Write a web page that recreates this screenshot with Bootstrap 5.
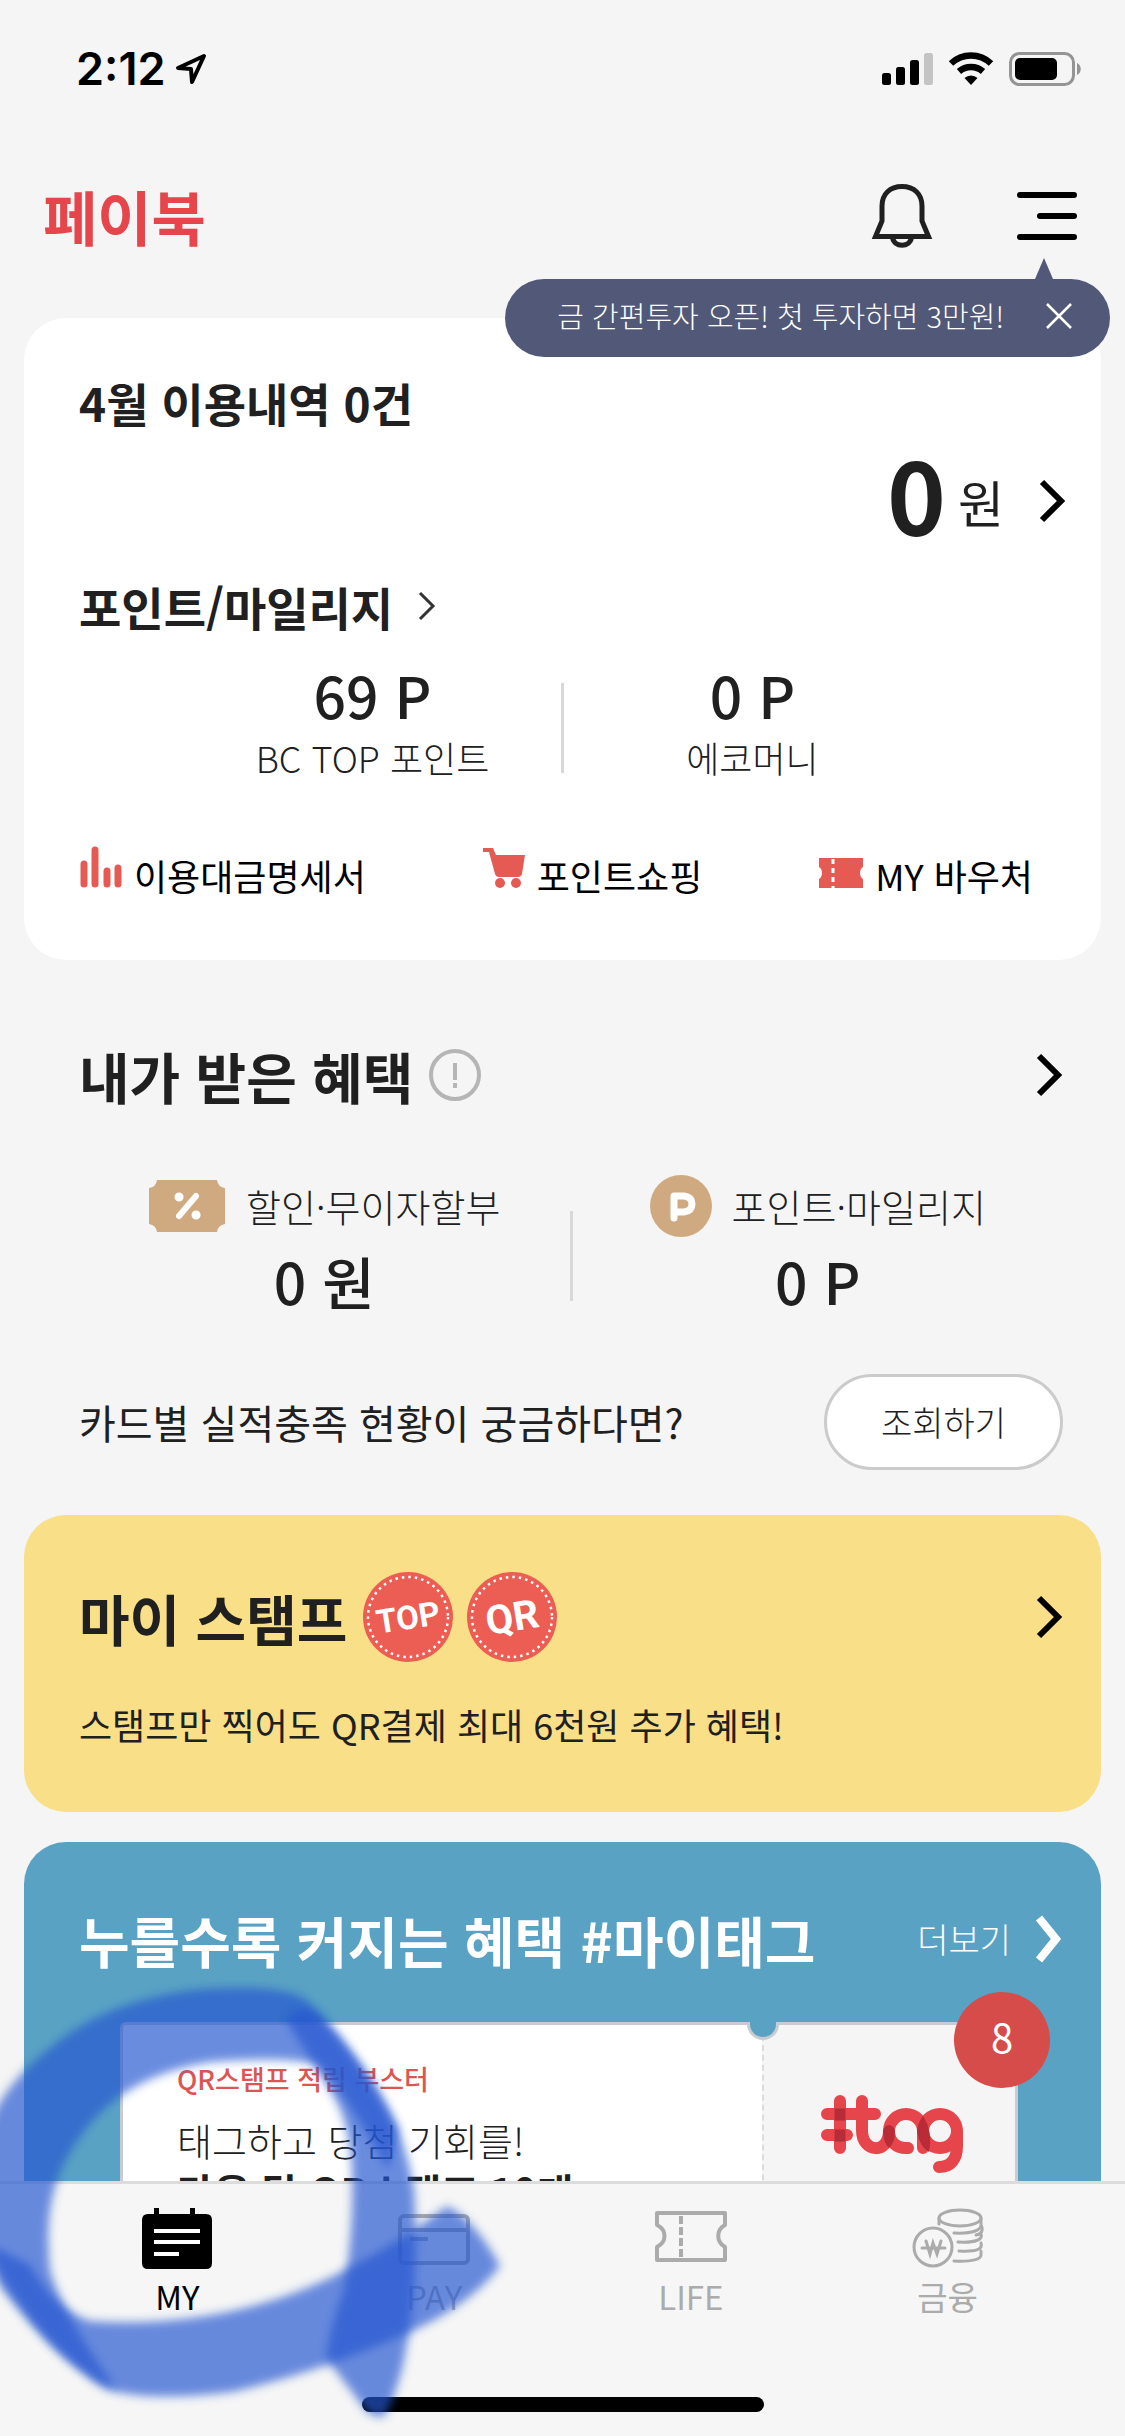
<!DOCTYPE html>
<html lang="ko">
<head>
<meta charset="utf-8">
<meta name="viewport" content="width=device-width, initial-scale=1">
<title>페이북</title>
<link href="https://cdn.jsdelivr.net/npm/bootstrap@5.3.0/dist/css/bootstrap.min.css" rel="stylesheet">
<style>
  body { background: #f5f5f5; color: #202020; font-family: "Noto Sans CJK KR", "Noto Sans", sans-serif; }
  a, a:hover { color: inherit; text-decoration: none; }
  svg { display: block; flex: none; }
  .plain-btn { border: 0; background: none; padding: 0; color: inherit; }

  .status-bar { height: 138px; padding: 0 43px 0 76px; color: #000; font-family: Inter, sans-serif; font-size: 45px; font-weight: 600; }
  .app-header { height: 156px; padding: 0 48px 0 43px; }
  .brand-logo { font-size: 59px; line-height: 70px; font-weight: 700; color: #e6464b; }
  .brand-logo:hover { color: #e6464b; }
  .header-tip { top: 141px; right: 15px; height: 78px; padding: 0 38px 4px 52px; border-radius: 39px; background: #525978; color: #fff; font-size: 29px; gap: 42px; z-index: 5; }
  .header-tip::before { content: ""; position: absolute; right: 57px; bottom: 100%; border: 9px solid transparent; border-top: 0; border-bottom: 21px solid #525978; }

  .main-area { padding: 24px 24px 0; min-height: 0; }
  .panel { border-radius: 42px; padding-left: 55px; padding-right: 38px; }
  .panel-usage { background: #fff; padding-top: 54px; padding-bottom: 61px; }
  .panel-benefit { padding-top: 80px; padding-bottom: 45px; }
  .panel-stamp { background: #f9df87; padding-top: 57px; padding-bottom: 64px; }
  .panel-tag { background: #5aa2c4; padding-top: 62px; margin-top: 30px; color: #fff; }

  .title-md { font-size: 46px; line-height: 60px; font-weight: 700; margin: 0; }
  .title-lg { font-size: 55px; line-height: 70px; font-weight: 700; margin: 0; }
  .text-std { font-size: 36px; line-height: 48px; }
  .text-mid { font-size: 38px; line-height: 48px; }
  .text-lead { font-size: 40px; line-height: 48px; }
  .text-sm2 { font-size: 34px; line-height: 48px; }
  .thin { font-weight: 300; }

  .amount { margin: 11px -3px 0 0; gap: 12px; }
  .amount-num { font-size: 100px; line-height: 100px; font-weight: 700; }
  .amount-unit { font-size: 50px; line-height: 60px; }
  .amount svg { margin-left: 22px; }
  .value { font-size: 57px; line-height: 62px; font-weight: 500; }
  .points-title { margin-top: 33px; gap: 24px; }
  .points { margin: 27px 122px 0 105px; }
  .points .value { margin-bottom: 8px; }
  .points .rule-v { margin-top: 12px; }
  .rule-v { width: 3px; height: 90px; background: #d8d8d8; flex: none; }
  .shortcuts { height: 48px; margin-top: 70px; padding-right: 30px; color: #000; }
  .shortcuts a { gap: 11px; }

  .benefit-row { margin-top: 65px; }
  .benefit-row .rule-v { margin-bottom: 10px; }
  .benefit-kind { height: 62px; gap: 20px; margin-bottom: 12px; }
  .inquiry { margin-top: 63px; }
  .btn-inquiry { border: 3px solid #cbcbcb; border-radius: 48px; background: #fff; padding: 21px 54px; color: #202020; }
  .stamp-text { margin-top: 38px; }
  .stamps { gap: 14px; margin-left: 16px; }

  .coupon { margin: 48px 45px 0 41px; height: 400px; border: 3px solid #c8ccd2; border-radius: 6px; background: #fff; color: #202020; }
  .coupon-body { padding: 36px 0 0 54px; }
  .coupon-kind { font-size: 27px; line-height: 36px; font-weight: 500; color: #dc5553; margin-bottom: 19px; }
  .coupon-prize { margin-top: 3px; }
  .coupon-side { width: 253px; background: #f5f5f5; border-left: 2px dashed #dcdcdc; padding: 69px 0 0 57px; }
  .coupon-notch { width: 32px; height: 18px; top: -3px; right: 236px; background: #5aa2c4; border: 3px solid #c8ccd2; border-top: 0; border-radius: 0 0 16px 16px; }
  .coupon-count { width: 96px; height: 96px; top: -33px; right: -35px; border-radius: 50%; background: #d64c4a; color: #fff; font-size: 40px; line-height: 88px; text-align: center; }

  .tab-bar { background: #f6f6f6; border-top: 3px solid #dcdcdc; padding: 24px 49px; height: 255px; }
  .tab-bar a { color: #ababab; font-size: 33px; line-height: 44px; gap: 4px; }
  .tab-bar a.active { color: #000; }
  .home-bar { width: 402px; height: 15px; bottom: 24px; left: 50%; margin-left: -201px; border-radius: 8px; background: #000; }
  .marker { left: 0; bottom: 0; z-index: 10; pointer-events: none; }
</style>
<script src="https://cdn.jsdelivr.net/npm/bootstrap@5.3.0/dist/js/bootstrap.bundle.min.js"></script>
</head>
<body>
<div class="vh-100 d-flex flex-column overflow-hidden position-relative">

  <div class="status-bar d-flex align-items-center justify-content-between flex-shrink-0">
    <div class="d-flex align-items-center gap-2">
      <span>2:12</span>
      <svg width="34" height="32" viewBox="-2 0 34 32" fill="none" stroke="#000" stroke-width="4" stroke-linejoin="round"><path d="M29 3 3 15l13 1 1 13z"/></svg>
    </div>
    <svg width="200" height="36" viewBox="0 0 200 36">
      <rect x="0" y="22" width="9" height="12" rx="2.500"/><rect x="14" y="16" width="9" height="18" rx="2.500"/><rect x="28" y="9" width="9" height="25" rx="2.500"/><rect x="42" y="2" width="9" height="32" rx="2.500" fill="#c4c4c4"/>
      <g fill="none" stroke="#000" stroke-width="6.500"><path d="M69 12.500a29 29 0 0 1 40 0"/><path d="M77 20.500a18 18 0 0 1 24 0"/></g>
      <path d="M89 34l-6.500-7a9.500 9.500 0 0 1 13 0z"/>
      <rect x="128.500" y="2.500" width="63" height="31" rx="9" fill="none" stroke="#949494" stroke-width="3"/>
      <rect x="133" y="7" width="42" height="22" rx="5"/><path d="M195 12c5 2 5 10 0 12z" fill="#949494"/>
    </svg>
  </div>

  <header class="app-header d-flex align-items-center justify-content-between position-relative flex-shrink-0">
    <a class="brand-logo" href="#">페이북</a>
    <div class="d-flex align-items-center">
      <button class="plain-btn" type="button" aria-label="알림">
        <svg width="62" height="66" viewBox="0 0 62 66" fill="none" stroke="#202020" stroke-width="5"><path d="M4.500 53.500h53L51 38V23C51 11 43 3.500 31 3.500S11 11 11 23v15z"/><path d="M21.500 54c1 11 18 11 19 0"/></svg>
      </button>
      <button class="plain-btn ms-5 ps-4" type="button" aria-label="메뉴">
        <svg width="72" height="50" viewBox="-12 0 72 50" stroke="#000" stroke-width="6" stroke-linecap="round"><path d="M3 4h54M23 25h34M3 46h54"/></svg>
      </button>
    </div>
    <div class="header-tip position-absolute d-flex align-items-center">
      <span class="thin">금 간편투자 오픈! 첫 투자하면 3만원!</span>
      <button class="plain-btn" type="button" aria-label="닫기">
        <svg width="26" height="26" viewBox="0 0 26 26" stroke="#fff" stroke-width="2.500"><path d="M1 1l24 24M25 1 1 25"/></svg>
      </button>
    </div>
  </header>

  <main class="main-area flex-grow-1 overflow-hidden">
    <section class="panel panel-usage">
      <h2 class="title-md">4월 이용내역 0건</h2>
      <a class="amount d-flex align-items-center justify-content-end" href="#">
        <span class="amount-num">0</span><span class="amount-unit pt-3">원</span>
        <svg class="mt-3" width="28" height="44" viewBox="0 0 28 44" fill="none" stroke="#000" stroke-width="6"><path d="M4 3l19 19L4 41"/></svg>
      </a>
      <a class="points-title d-flex align-items-center" href="#">
        <span class="title-md">포인트/마일리지</span>
        <svg width="20" height="30" viewBox="0 0 20 30" fill="none" stroke="#333" stroke-width="3"><path d="M3 2l13 13L3 28"/></svg>
      </a>
      <div class="points d-flex align-items-center text-center">
        <div class="w-50"><div class="value">69 P</div><div class="text-std thin">BC TOP 포인트</div></div>
        <div class="rule-v"></div>
        <div class="w-50"><div class="value">0 P</div><div class="text-std thin">에코머니</div></div>
      </div>
      <nav class="shortcuts d-flex justify-content-between align-items-center text-std">
        <a class="d-flex align-items-center" href="#">
          <svg class="mb-3" width="44" height="44" viewBox="0 0 44 44" stroke="#e65a54" stroke-width="7" stroke-linecap="round"><path d="M5 19v20M16 5v34M28 26v13M39 23v16"/></svg>이용대금명세서</a>
        <a class="d-flex align-items-center" href="#">
          <svg class="mb-3" width="44" height="44" viewBox="0 0 44 44" fill="#e65a54"><path d="M1 3h10l3 7h29l-3 19q-1 3-4 3H17q-3 0-4-3L7 7H1z"/><circle cx="18" cy="38" r="5"/><circle cx="34" cy="38" r="5"/></svg>포인트쇼핑</a>
        <a class="d-flex align-items-center" href="#">
          <svg class="mb-1" width="46" height="32" viewBox="0 0 46 32"><path d="M1 1h44v9c-4 2-4 10 0 12v9H1v-9c4-2 4-10 0-12z" fill="#e65a54"/><path d="M15 2v29" stroke="#fff" stroke-width="3" stroke-dasharray="5 4"/></svg>MY 바우처</a>
      </nav>
    </section>

    <section class="panel panel-benefit">
      <a class="d-flex align-items-center" href="#">
        <h2 class="title-lg">내가 받은 혜택</h2>
        <svg class="ms-3" width="52" height="52" viewBox="0 0 52 52" fill="none" stroke="#b5b5b5" stroke-width="4"><circle cx="26" cy="26" r="24"/><path d="M26 14v17M26 34v5"/></svg>
        <svg class="ms-auto" width="28" height="44" viewBox="0 0 28 44" fill="none" stroke="#000" stroke-width="6"><path d="M4 3l19 19L4 41"/></svg>
      </a>
      <div class="benefit-row d-flex align-items-end text-center">
        <div class="w-50">
          <div class="benefit-kind d-flex align-items-center justify-content-center text-mid thin">
            <svg width="78" height="54" viewBox="0 0 78 54"><path d="M9 1h60q1 7 8 8v36q-7 1-8 8H9q-1-7-8-8V9q7-1 8-8z" fill="#cfa980"/><g stroke="#fff" stroke-linecap="round"><path d="M48 17 31 37" stroke-width="6"/><path d="M31 18h.1M48 36h.1" stroke-width="9"/></g></svg>
            할인·무이자할부</div>
          <div class="value">0 원</div>
        </div>
        <div class="rule-v"></div>
        <div class="w-50">
          <div class="benefit-kind d-flex align-items-center justify-content-center text-mid thin">
            <svg width="62" height="62" viewBox="0 0 62 62"><circle cx="31" cy="31" r="31" fill="#cfa980"/><path d="M24 43V21h10q8 1 8 8t-8 8H24" fill="none" stroke="#fff" stroke-width="7" stroke-linecap="round" stroke-linejoin="round"/></svg>
            포인트·마일리지</div>
          <div class="value">0 P</div>
        </div>
      </div>
      <div class="inquiry d-flex align-items-center justify-content-between">
        <span class="text-lead">카드별 실적충족 현황이 궁금하다면?</span>
        <button class="btn-inquiry text-sm2 thin" type="button">조회하기</button>
      </div>
    </section>

    <section class="panel panel-stamp">
      <a class="d-flex align-items-center" href="#">
        <h2 class="title-lg">마이 스탬프</h2>
        <span class="stamps d-flex">
          <svg width="90" height="90" viewBox="0 0 90 90"><circle cx="45" cy="45" r="45" fill="#ec5d54"/><circle cx="45" cy="45" r="40" fill="none" stroke="#fff" stroke-width="2.500" stroke-dasharray="2.500 4"/><text x="45" y="57" transform="rotate(-9 45 45)" text-anchor="middle" fill="#fff" font-family="Roboto, sans-serif" font-weight="700" font-size="33">TOP</text></svg>
          <svg width="90" height="90" viewBox="0 0 90 90"><circle cx="45" cy="45" r="45" fill="#ec5d54"/><circle cx="45" cy="45" r="40" fill="none" stroke="#fff" stroke-width="2.500" stroke-dasharray="2.500 4"/><text x="45" y="59" transform="rotate(-9 45 45)" text-anchor="middle" fill="#fff" font-family="Roboto, sans-serif" font-weight="700" font-size="40">QR</text></svg>
        </span>
        <svg class="ms-auto" width="28" height="44" viewBox="0 0 28 44" fill="none" stroke="#000" stroke-width="6"><path d="M4 3l19 19L4 41"/></svg>
      </a>
      <p class="stamp-text text-std mb-0">스탬프만 찍어도 QR결제 최대 6천원 추가 혜택!</p>
    </section>

    <section class="panel panel-tag">
      <div class="d-flex align-items-center justify-content-between">
        <h2 class="title-lg">누를수록 커지는 혜택 #마이태그</h2>
        <a class="text-sm2 thin d-flex align-items-center gap-4" href="#">더보기
          <svg width="28" height="48" viewBox="0 0 28 48" fill="none" stroke="#fff" stroke-width="8"><path d="M4 3l17 21L4 45"/></svg></a>
      </div>
      <article class="coupon d-flex position-relative">
        <div class="coupon-body flex-grow-1">
          <div class="coupon-kind">QR스탬프 적립 부스터</div>
          <div class="text-mid thin">태그하고 당첨 기회를!</div>
          <div class="coupon-prize text-lead fw-bold">다음 달 QR스탬프 10개</div>
        </div>
        <div class="coupon-side">
          <svg width="144" height="86" viewBox="0 0 144 86" fill="none" stroke-width="12" stroke-linecap="round">
            <g stroke="#e6464b"><path d="M19 7v47M6 20h48M6 41h20"/><path d="M41 7v29c0 24 27 24 27 1"/><path d="M87 54c-12 1-19-7-19-17a17 17 0 0 1 34 0v17"/><circle cx="119" cy="37" r="17"/><path d="M136 37v15c0 13-6 21-18 21"/></g>
            <path d="M19 20v1M19 41v1" stroke="#b92b37" stroke-linecap="square" stroke-width="11"/><path d="M62 37c2-8 10-8 12 0q0 12-6 17-6-6-6-17zM102 22q10 15 6 36-9-5-12-20 0-8 6-16z" fill="#b92b37"/>
          </svg>
        </div>
        <span class="coupon-notch position-absolute"></span>
        <span class="coupon-count position-absolute">8</span>
      </article>
    </section>
  </main>

  <nav class="tab-bar d-flex flex-shrink-0 position-relative">
    <a class="active w-25 d-flex flex-column align-items-center" href="#">
      <svg width="70" height="62" viewBox="0 0 70 62"><path d="M12 0h5v6h31V0h5v6h11q6 0 6 6v43q0 6-6 6H6q-6 0-6-6V12q0-6 6-6h6z"/><path d="M12 23h46M12 34h46M12 46h25" stroke="#fff" stroke-width="4"/></svg>MY</a>
    <a class="w-25 d-flex flex-column align-items-center" href="#">
      <svg width="74" height="62" viewBox="0 0 74 62" fill="none" stroke="#ababab" stroke-width="4"><rect x="3" y="8" width="68" height="47" rx="4"/><path d="M3 22h68M13 31h18"/></svg>PAY</a>
    <a class="w-25 d-flex flex-column align-items-center" href="#">
      <svg width="74" height="62" viewBox="0 0 74 62" fill="none" stroke="#ababab" stroke-width="4"><path d="M3 5h68v12c-9 5-9 17 0 22v13H3V39c10-5 10-17 0-22z" stroke-linejoin="round"/><path d="M27 8v41" stroke-dasharray="8 3"/></svg>LIFE</a>
    <a class="w-25 d-flex flex-column align-items-center" href="#">
      <svg width="74" height="62" viewBox="0 0 74 62" fill="none" stroke="#ababab" stroke-width="3" stroke-linecap="round"><circle cx="22" cy="39" r="19"/><path d="M15 33l4 13 3-11 4 11 4-13M11 40h23"/><ellipse cx="49" cy="10" rx="21" ry="8"/><path d="M28 10v6M70 10v7c0 5-8 9-27 8M70 17c3 6 0 9-5 10M70 26c2 5-4 9-23 8M70 35c2 6-4 9-22 8M70 43v4c0 4-8 7-27 6"/></svg>금융</a>
    <div class="home-bar position-absolute"></div>
  </nav>

  <svg class="marker position-absolute" width="510" height="456" viewBox="0 0 510 456" aria-hidden="true">
    <defs><filter id="soft" x="-20%" y="-20%" width="140%" height="140%"><feGaussianBlur stdDeviation="5"/></filter></defs>
    <g fill="#2455d0" fill-opacity=".68">
      <path filter="url(#soft)" d="M447 226Q475 240 500 286Q470 325 410 352Q320 392 232 412Q130 424 98 404Q40 360 0 306L-20 260L30 285Q55 330 90 341C190 348 280 325 345 290Q400 262 447 226z"/>
      <path filter="url(#soft)" d="M118 412Q60 385 24 330C-10 285-30 240-20 170Q-5 110 50 68C100 25 170 8 230 8Q280 6 304 18Q350 60 398 150L388 190Q350 120 318 84Q280 76 210 82Q120 96 78 160C50 200 45 240 50 290Q60 330 118 412z"/>
      <path filter="url(#soft)" d="M286 40Q300 20 318 34C360 80 402 130 414 210Q420 300 404 380Q396 416 384 436Q370 440 358 420L326 378Q330 345 344 310Q354 250 352 190Q350 140 330 110z"/>
    </g>
  </svg>
</div>
</body>
</html>
